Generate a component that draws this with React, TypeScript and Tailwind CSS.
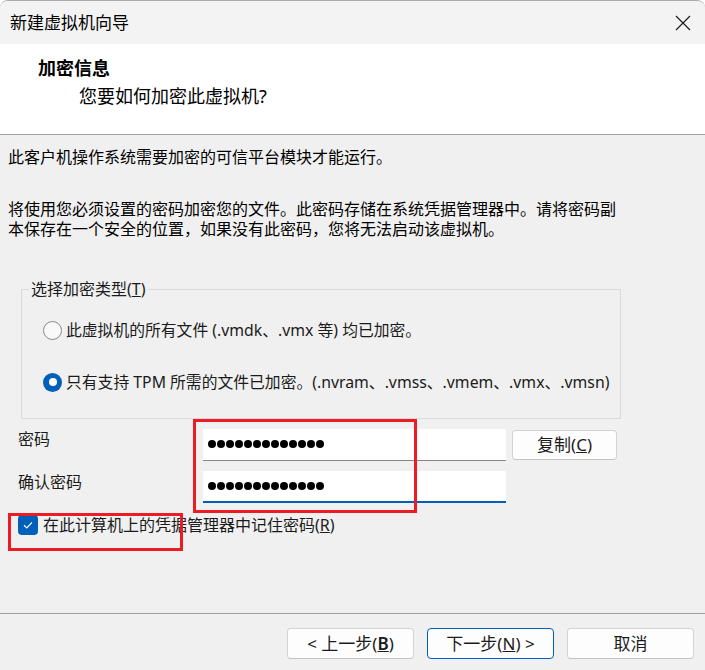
const font = {
  fontFamily: '"Noto Sans", "Noto Sans CJK SC", sans-serif',
};

const Dots = () => (
  <div className="flex gap-[1px]">
    {Array.from({ length: 13 }).map((_, i) => (
      <span key={i} className="h-[8px] w-[8px] rounded-full bg-black" />
    ))}
  </div>
);

const Radio = ({ checked, label }: { checked?: boolean; label: string }) => (
  <div className="flex items-center gap-[4px] pl-[21px] leading-[24px]">
    {checked ? (
      <span className="flex h-[19px] w-[19px] items-center justify-center rounded-full bg-[#005fb8]">
        <span className="h-[8px] w-[8px] rounded-full bg-white" />
      </span>
    ) : (
      <span className="h-[19px] w-[19px] rounded-full border border-[#8a8a8a] bg-[#f9f9f9]" />
    )}
    <span className="text-[15.8px] text-[#1b1b1b]">{label}</span>
  </div>
);

const Button = ({
  children,
  primary,
}: {
  children: React.ReactNode;
  primary?: boolean;
}) => (
  <div
    className={`flex h-[31px] w-[127px] items-center justify-center rounded-[4px] border bg-[#fdfdfd] text-[17px] text-[#1b1b1b] ${
      primary ? "border-[#005fb8]" : "border-[#d3d3d3] border-b-[#c2c2c2]"
    }`}
  >
    {children}
  </div>
);

export default function App() {
  return (
    <div
      className="relative flex h-[670px] w-[705px] flex-col overflow-hidden rounded-t-[8px] border-t border-[#a9a9a9] bg-[#f0f0f0]"
      style={font}
    >
      {/* title bar */}
      <div className="flex h-[43px] items-center justify-between bg-[#f3f3f3] pl-[10px] pr-[14px]">
        <span className="text-[17px] text-black">新建虚拟机向导</span>
        <svg width="16" height="16" viewBox="0 0 16 16">
          <path d="M1 1 L15 15 M15 1 L1 15" stroke="#1b1b1b" strokeWidth="1.2" />
        </svg>
      </div>

      {/* header */}
      <div className="h-[91px] border-b border-[#a0a0a0] bg-white pt-[12px]">
        <div className="pl-[38px] text-[18px] font-bold leading-[24px] text-black">
          加密信息
        </div>
        <div className="mt-[4px] pl-[79px] text-[18px] leading-[24px] text-black">
          您要如何加密此虚拟机?
        </div>
      </div>

      {/* body */}
      <div className="pl-[8px] pt-[12px] text-[16px] leading-[20px] text-black">
        此客户机操作系统需要加密的可信平台模块才能运行。
      </div>
      <div className="mt-[32px] pl-[8px] text-[16px] leading-[20px] text-black">
        <div>将使用您必须设置的密码加密您的文件。此密码存储在系统凭据管理器中。请将密码副</div>
        <div>本保存在一个安全的位置，如果没有此密码，您将无法启动该虚拟机。</div>
      </div>

      <fieldset className="ml-[21px] mt-[40px] w-[600px] border border-[#dadada] pb-[24px]">
        <legend className="ml-[7px] px-[2px] text-[16px] leading-[20px] text-[#1b1b1b]">
          选择加密类型(<span className="underline">T</span>)
        </legend>
        <div className="mt-[19px]">
          <Radio label="此虚拟机的所有文件 (.vmdk、.vmx 等) 均已加密。" />
        </div>
        <div className="mt-[28px]">
          <Radio checked label="只有支持 TPM 所需的文件已加密。(.nvram、.vmss、.vmem、.vmx、.vmsn)" />
        </div>
      </fieldset>

      {/* password */}
      <div className="mt-[10px] flex items-start">
        <div className="w-[203px] pl-[18px] text-[16px] leading-[20px] text-[#1b1b1b]">
          密码
        </div>
        <div className="flex h-[32px] w-[303px] items-center border-b border-[#868686] bg-white pb-[2px] pl-[5px]">
          <Dots />
        </div>
        <div className="ml-[6px] mt-[1px] flex h-[30px] w-[105px] items-center justify-center rounded-[4px] border border-[#d3d3d3] border-b-[#c2c2c2] bg-[#fdfdfd] text-[17px] text-[#1b1b1b]">
          复制(<span className="underline">C</span>)
        </div>
      </div>
      <div className="mt-[10px] flex items-start">
        <div className="w-[203px] pl-[18px] pt-[1px] text-[16px] leading-[20px] text-[#1b1b1b]">
          确认密码
        </div>
        <div className="flex h-[32px] w-[303px] items-center border-b-2 border-[#005fb8] bg-white pl-[5px]">
          <Dots />
        </div>
      </div>

      <div className="mt-[12px] flex items-center gap-[5px] pl-[18px]">
        <span className="flex h-[20px] w-[20px] items-center justify-center rounded-[4px] bg-[#005fb8]">
          <svg width="12" height="12" viewBox="0 0 12 12">
            <path d="M2 6.3 L4.8 9 L10 3.3" stroke="white" strokeWidth="1.2" fill="none" />
          </svg>
        </span>
        <span className="text-[16px] leading-[20px] text-[#1b1b1b]">
          在此计算机上的凭据管理器中记住密码(<span className="underline">R</span>)
        </span>
      </div>

      {/* footer */}
      <div className="mt-auto flex h-[57px] justify-end gap-[13px] border-t border-[#a0a0a0] pr-[11px] pt-[14px]">
        <Button>
          &lt; 上一步(<span className="font-semibold underline">B</span>)
        </Button>
        <Button primary>
          下一步(<span className="underline">N</span>) &gt;
        </Button>
        <Button>取消</Button>
      </div>

      {/* red annotation boxes */}
      <div className="absolute left-[193px] top-[418px] h-[94px] w-[224px] border-[3px] border-[#ed1c24]" />
      <div className="absolute left-[8px] top-[512px] h-[38px] w-[175px] border-[3px] border-[#ed1c24]" />
    </div>
  );
}
